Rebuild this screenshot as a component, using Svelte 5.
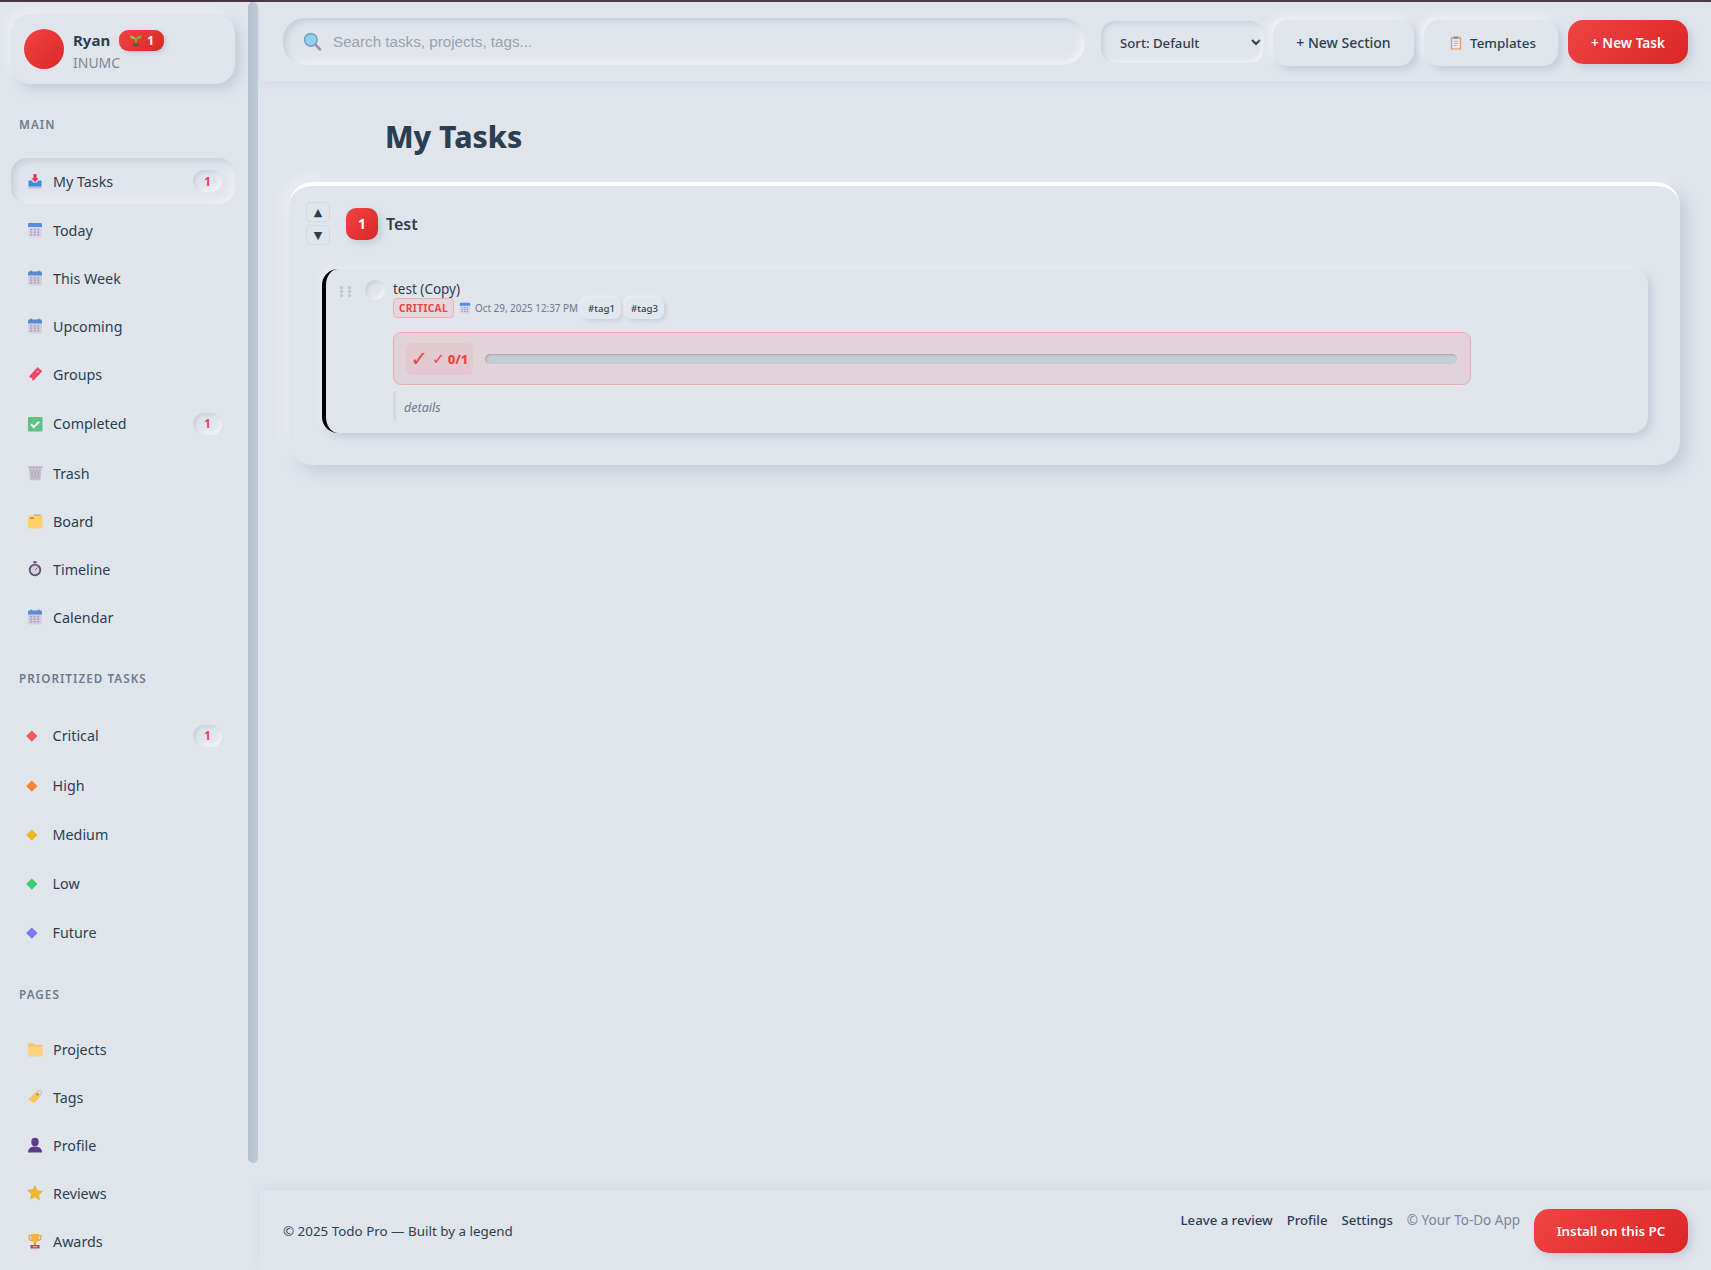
<script>
  const main = [
    { label: 'My Tasks', icon: 'inbox', badge: 1, active: true },
    { label: 'Today', icon: 'cal1' },
    { label: 'This Week', icon: 'cal2' },
    { label: 'Upcoming', icon: 'cal2' },
    { label: 'Groups', icon: 'ticket' },
    { label: 'Completed', icon: 'check', badge: 1 },
    { label: 'Trash', icon: 'trash' },
    { label: 'Board', icon: 'board' },
    { label: 'Timeline', icon: 'watch' },
    { label: 'Calendar', icon: 'cal2' }
  ];
  const prios = [
    { label: 'Critical', color: '#ef5a5f', badge: 1 },
    { label: 'High', color: '#f98234' },
    { label: 'Medium', color: '#eab72b' },
    { label: 'Low', color: '#3ecb72' },
    { label: 'Future', color: '#7a7bf0' }
  ];
  const pages = [
    { label: 'Projects', icon: 'folder' },
    { label: 'Tags', icon: 'tag' },
    { label: 'Profile', icon: 'bust' },
    { label: 'Reviews', icon: 'star' },
    { label: 'Awards', icon: 'trophy' }
  ];
  const grid = [3, 6.5, 10];
</script>

{#snippet calGrid()}
  {#each grid as x}
    {#each [7.5, 10, 12.5] as y}
      <rect x={x + 0.2} y={y - 0.6} width="2" height="1.5" fill="#a79dbd" />
    {/each}
  {/each}
{/snippet}

{#snippet icon(name)}
  <svg class="ico" viewBox="0 0 16 16" aria-hidden="true">
    {#if name === 'inbox'}
      <path d="M1.5 13.5h13v1.5a.6.6 0 0 1-.6.6H2.1a.6.6 0 0 1-.6-.6z" fill="#cbb9d3" />
      <path d="M1.5 7.5h3.4l1 2h4.2l1-2h3.4v6h-13z" fill="#3a8fde" />
      <path d="M6.4 1h3.2v4.2h2.2L8 9 4.2 5.2h2.2z" fill="#e8365d" />
    {:else if name === 'cal1'}
      <rect x="1" y="1" width="14" height="14.5" rx="1.4" fill="#dcd3e8" />
      <path d="M1 2.4A1.4 1.4 0 0 1 2.4 1h11.2A1.4 1.4 0 0 1 15 2.4V5H1z" fill="#4a90f0" />
      {@render calGrid()}
    {:else if name === 'cal2'}
      <rect x="1" y="1.6" width="14" height="13.9" rx="1.4" fill="#d3cfdf" />
      <path d="M1 3a1.4 1.4 0 0 1 1.4-1.4h11.2A1.4 1.4 0 0 1 15 3v2.6H1z" fill="#5490d8" />
      <rect x="3.6" y="0.4" width="1" height="2.4" fill="#6b6b8e" />
      <rect x="11.4" y="0.4" width="1" height="2.4" fill="#6b6b8e" />
      {@render calGrid()}
    {:else if name === 'ticket'}
      <path d="M10.6 1l4.6 4.2-8.8 9.6-1.4-1.3.2-1.6-1.6.1L2 10.5z" fill="#f0476b" />
      <circle cx="10.5" cy="5.8" r="1.1" fill="#f9a9bb" />
    {:else if name === 'check'}
      <rect x="1" y="1" width="14.5" height="14.5" rx="1" fill="#5dc286" />
      <path d="M4 8.2l2.8 2.8L12.2 5.8" fill="none" stroke="#eef8f1" stroke-width="2" />
    {:else if name === 'trash'}
      <path d="M.8 1.2h14.9l-.6 2H1.4z" fill="#b9b4c6" />
      <path d="M1.8 3h12.9l-1.2 12.2H3z" fill="#c7c2d2" />
      <path d="M3.5 4.5l3 9M6.5 4.5l3 9M9.5 4.5l3 9M13 4.5l-3 9M10 4.5l-3 9M7 4.5l-3 9" stroke="#a9a4b8" stroke-width=".6" />
    {:else if name === 'board'}
      <path d="M7 1.4h6.2l1.2 3H7z" fill="#8fa88a" />
      <rect x="1" y="2.6" width="14.5" height="13" rx="1" fill="#fdd26e" />
      <rect x="3" y="4.6" width="4" height="1" fill="#e0483e" />
    {:else if name === 'watch'}
      <rect x="6.4" y="0.2" width="3.2" height="2" fill="#54506e" />
      <circle cx="8" cy="9" r="6.2" fill="#5a5478" />
      <circle cx="8" cy="9" r="4.4" fill="#d8d0de" />
      <path d="M8 9l2.4-2.4" stroke="#e8365d" stroke-width="1" />
    {:else if name === 'folder'}
      <path d="M1 2.2h5.4l1.4 1.6H15.5v11.4H1z" fill="#fbc463" />
      <path d="M1 5.6h14.5v9.6H1z" fill="#fdd27e" />
    {:else if name === 'tag'}
      <path d="M9.6 2.4l4.8 3.2-7 8.6L1 10.4z" fill="#f9c35e" />
      <path d="M10 2.5l3.2-1.3 1.4 1.1-.2 3.3" fill="none" stroke="#b9b4c6" stroke-width=".9" />
      <circle cx="10.4" cy="5.4" r="1" fill="#e8567a" />
    {:else if name === 'bust'}
      <ellipse cx="8" cy="4.9" rx="3.7" ry="4.2" fill="#5c3a8a" />
      <path d="M1 15.6c0-4 3-6 7-6s7 2 7 6z" fill="#5c3a8a" />
    {:else if name === 'star'}
      <path d="M8 .6l2.3 4.9 5.4.7-4 3.7 1 5.4L8 12l-4.7 2.3 1-5.4-4-3.7 5.4-.7z" fill="#eeb92e" stroke="#e2a830" stroke-width=".4" stroke-linejoin="round" />
    {:else if name === 'trophy'}
      <path d="M2 2.5h12v2c0 2-1.5 3-3 3M2 2.5v2c0 2 1.5 3 3 3" fill="none" stroke="#e6a02c" stroke-width="1.2" />
      <path d="M4 1h8v4.6c0 2.4-1.8 3.9-4 3.9S4 8 4 5.6z" fill="#f4b43c" />
      <rect x="7" y="9" width="2" height="3" fill="#e6a02c" />
      <rect x="3.4" y="12" width="9.2" height="3.6" rx=".5" fill="#9c5560" />
      <rect x="6" y="13.2" width="4" height="1.1" fill="#eec46a" />
    {/if}
  </svg>
{/snippet}

{#snippet item(it)}
  <div class="item" class:active={it.active} class:tall={it.badge}>
    {@render icon(it.icon)}
    <span class="lbl">{it.label}</span>
    {#if it.badge}<span class="count">{it.badge}</span>{/if}
  </div>
{/snippet}

<div class="topline"></div>
<div class="app">
  <aside class="sidebar">
    <div class="scrollthumb"></div>
    <div class="user">
      <div class="avatar"></div>
      <div class="who">
        <div class="nameline">
          <span class="name">Ryan</span>
          <span class="level">
            <svg class="sprout" viewBox="0 0 16 16" aria-hidden="true">
              <path d="M8 6v5.5" stroke="#7fb338" stroke-width="1.8" />
              <path d="M8 7C7 3.8 4.4 3 1 3c.4 3 3 4.6 7 4z" fill="#8cc63f" />
              <path d="M8 6.6c.6-2.4 3-3.4 7-3.4-.5 2.6-3 4.4-7 3.4z" fill="#7fb338" />
              <path d="M4 15c.4-3 2-4 4-4s3.6 1 4 4z" fill="#7b4f3a" />
            </svg>
            1
          </span>
        </div>
        <div class="org">INUMC</div>
      </div>
    </div>

    <div class="heading first">MAIN</div>
    {#each main as it}{@render item(it)}{/each}

    <div class="heading">PRIORITIZED TASKS</div>
    {#each prios as p}
      <div class="item prio" class:tall={p.badge}>
        <span class="diamond" style="background:{p.color}"></span>
        <span class="lbl">{p.label}</span>
        {#if p.badge}<span class="count">{p.badge}</span>{/if}
      </div>
    {/each}

    <div class="heading last">PAGES</div>
    {#each pages as it}{@render item(it)}{/each}
  </aside>

  <div class="main">
    <header class="topbar">
      <div class="search">
        <svg class="mag" viewBox="0 0 18 18" aria-hidden="true">
          <path d="M11 11l5 5.4" stroke="#a88bb5" stroke-width="2.6" stroke-linecap="round" />
          <circle cx="7.4" cy="7.4" r="6" fill="#8fd3ea" stroke="#7a9cc0" stroke-width="1.4" />
        </svg>
        <input type="text" placeholder="Search tasks, projects, tags..." />
      </div>
      <select class="sort"><option>Sort: Default</option></select>
      <button class="btn section-btn">+ New Section</button>
      <button class="btn tpl">
        <svg class="clip" viewBox="0 0 14 16" aria-hidden="true">
          <rect x="1" y="1.4" width="12" height="14.2" rx="1" fill="#e09a62" />
          <rect x="2.5" y="3" width="9" height="11.4" fill="#ece8f0" />
          <rect x="4" y="0.4" width="6" height="2.6" fill="#8a8a9c" />
          <path d="M4 6h6M4 8.6h6M4 11.2h4" stroke="#b7a9cc" stroke-width="1" />
        </svg>
        Templates
      </button>
      <button class="btn primary">+ New Task</button>
    </header>

    <main class="content">
      <h1>My Tasks</h1>
      <section class="card">
        <div class="head">
          <div class="arrows">
            <button class="arrow">▲</button>
            <button class="arrow">▼</button>
          </div>
          <span class="num">1</span>
          <h2>Test</h2>
        </div>

        <div class="task">
          <div class="handle">
            {#each Array(6) as _}<i></i>{/each}
          </div>
          <div class="circle"></div>
          <div class="body">
            <div class="title">test (Copy)</div>
            <div class="meta">
              <span class="crit">CRITICAL</span>
              <svg class="ico small" viewBox="0 0 16 16" aria-hidden="true">
                <rect x="1" y="1" width="14" height="14.5" rx="1.4" fill="#dcd3e8" />
                <path d="M1 2.4A1.4 1.4 0 0 1 2.4 1h11.2A1.4 1.4 0 0 1 15 2.4V5H1z" fill="#4a90f0" />
                {@render calGrid()}
              </svg>
              <span class="date">Oct 29, 2025 12:37 PM</span>
              <span class="tagchip">#tag1</span>
              <span class="tagchip">#tag3</span>
            </div>
            <div class="progress">
              <span class="pcount"><span class="bigcheck">✓</span><span class="smallcheck">✓</span> 0/1</span>
              <div class="bar"></div>
            </div>
            <div class="details">details</div>
          </div>
        </div>
      </section>
    </main>

    <footer class="footer">
      <span class="copy">© 2025 Todo Pro — Built by a legend</span>
      <div class="fright">
        <nav class="links">
          <span>Leave a review</span>
          <span>Profile</span>
          <span>Settings</span>
          <span class="muted">© Your To-Do App</span>
        </nav>
        <button class="install">Install on this PC</button>
      </div>
    </footer>
  </div>
</div>

<style>
  :global(body) {
    margin: 0;
    background: #e0e5ec;
    overflow: hidden;
  }
  .topline {
    height: 2px;
    background: #4a3540;
  }
  .app {
    display: grid;
    grid-template-columns: 260px 1fr;
    height: calc(100vh - 2px);
    font-family: "Noto Sans", "Open Sans", sans-serif;
    color: #2c3e50;
    background: #e0e5ec;
  }
  .sidebar {
    position: relative;
    box-sizing: border-box;
    height: 100%;
    overflow: hidden;
    padding: 12px 25px 0 11px;
  }
  .scrollthumb {
    position: absolute;
    top: 0;
    left: 248px;
    width: 10px;
    height: 1161px;
    border-radius: 5px;
    background: linear-gradient(90deg, #b4c1cf, #bfcad7);
  }
  .user {
    display: flex;
    align-items: center;
    gap: 9px;
    height: 70px;
    box-sizing: border-box;
    padding: 0 13px;
    border-radius: 20px;
    background: #e0e5ec;
    box-shadow: 5px 5px 12px #c3ccd9, -4px -4px 8px #eef1f5;
  }
  .avatar {
    width: 40px;
    height: 40px;
    flex: none;
    border-radius: 50%;
    background: linear-gradient(135deg, #ef4444, #dc2626);
  }
  .who {
    margin-bottom: -2px;
  }
  .nameline {
    display: flex;
    align-items: center;
    gap: 9px;
    height: 24px;
  }
  .name {
    font-size: 15px;
    font-weight: 700;
    line-height: 20px;
  }
  .level {
    display: inline-flex;
    align-items: center;
    justify-content: center;
    gap: 4px;
    width: 45px;
    height: 21px;
    border-radius: 9px;
    font-size: 12.5px;
    font-weight: 700;
    color: #fff;
    background: linear-gradient(135deg, #ef4444, #dc2626);
    box-shadow: 2px 2px 5px #c3ccd9;
  }
  .sprout {
    width: 14px;
    height: 14px;
  }
  .org {
    margin-top: 2px;
    font-size: 14px;
    line-height: 18px;
    color: #7c8797;
  }
  .heading {
    margin: 31px 0 26px 8px;
    font-size: 11.7px;
    line-height: 16px;
    font-weight: 600;
    letter-spacing: 1.05px;
    color: #6f7a8b;
  }
  .heading.first {
    margin-top: 32px;
    margin-bottom: 26px;
  }
  .heading.last {
    margin-bottom: 25px;
  }
  .item {
    display: flex;
    align-items: center;
    height: 44px;
    box-sizing: border-box;
    margin-bottom: 4px;
    padding: 0 13px 0 16px;
    border-radius: 16px;
    font-size: 14.3px;
    color: #2c3e50;
  }
  .item.tall {
    height: 47px;
  }
  .item.active {
    height: 46px;
  }
  .item.prio {
    height: 45px;
  }
  .item.prio.tall {
    height: 47px;
  }
  .item.active {
    box-shadow: inset 3px 3px 7px #c5cdd9, inset -3px -3px 7px #f2f4f8;
  }
  .ico {
    width: 16px;
    height: 16px;
    flex: none;
  }
  .ico.small {
    width: 12px;
    height: 12px;
  }
  .lbl {
    margin-left: 10px;
  }
  .prio .lbl {
    margin-left: 16px;
  }
  .diamond {
    width: 7.6px;
    height: 7.6px;
    margin-left: 1px;
    margin-right: 1px;
    flex: none;
    transform: rotate(45deg);
  }
  .count {
    margin-left: auto;
    width: 29px;
    height: 22px;
    border-radius: 11px;
    display: flex;
    align-items: center;
    justify-content: center;
    font-size: 11.5px;
    font-weight: 700;
    color: #ef4060;
    box-shadow: inset 2px 2px 4px #c8cfdb, inset -2px -2px 4px #f5f7fa;
  }

  .main {
    display: flex;
    flex-direction: column;
    min-width: 0;
  }
  .topbar {
    display: flex;
    align-items: center;
    height: 79px;
    flex: none;
    box-sizing: border-box;
    padding: 0 23px;
    box-shadow: 0 3px 10px rgba(180, 192, 208, 0.25);
  }
  .search {
    display: flex;
    align-items: center;
    width: 802px;
    height: 47px;
    box-sizing: border-box;
    padding: 0 20px;
    border-radius: 22px;
    box-shadow: inset 3px 3px 7px #c5cdd9, inset -3px -3px 7px #f5f7fa;
  }
  .mag {
    width: 19px;
    height: 19px;
    flex: none;
  }
  .search input {
    flex: 1;
    min-width: 0;
    margin-left: 11px;
    border: 0;
    outline: 0;
    padding: 0;
    background: transparent;
    font-family: "Liberation Sans", Arial, sans-serif;
    font-size: 15.2px;
  }
  .search input::placeholder {
    color: #9ca3af;
    opacity: 1;
  }
  .sort {
    width: 163px;
    height: 42px;
    margin-left: 16px;
    margin-top: 1px;
    box-sizing: border-box;
    padding: 2px 15px 0;
    border: 0;
    border-radius: 14px;
    background: #e0e5ec;
    font-family: inherit;
    font-size: 13.2px;
    font-weight: 500;
    color: #2c3e50;
    box-shadow: inset 2px 2px 5px #c5cdd9, inset -2px -2px 5px #f5f7fa;
  }
  .btn {
    display: inline-flex;
    align-items: center;
    justify-content: center;
    height: 46px;
    margin-top: 2px;
    border: 0;
    border-radius: 15px;
    background: #e0e5ec;
    font-family: inherit;
    font-size: 14px;
    font-weight: 500;
    color: #2c3e50;
    box-shadow: 4px 4px 9px #c3ccd9, -3px -3px 7px #f3f5f8;
  }
  .section-btn {
    width: 141px;
    margin-left: 9px;
  }
  .tpl {
    width: 134px;
    margin-left: 10px;
    gap: 8px;
    padding-left: 10px;
    font-size: 13.4px;
  }
  .clip {
    width: 12px;
    height: 14px;
  }
  .primary {
    width: 120px;
    height: 44px;
    margin-left: 10px;
    margin-top: 1px;
    color: #fff;
    font-size: 13.6px;
    font-weight: 600;
    background: linear-gradient(135deg, #ef4444, #dc2626);
    box-shadow: 4px 4px 10px #c3ccd9;
  }

  .content {
    flex: 1;
    min-height: 0;
    padding: 0 31px 0 29px;
  }
  h1 {
    margin: 36px 0 25px 96px;
    font-size: 30px;
    line-height: 40px;
    font-weight: 800;
    color: #2c3e50;
  }
  .card {
    box-sizing: border-box;
    border-top: 4px solid #fff;
    padding: 16px 32px 32px 33px;
    border-radius: 24px;
    background: #e0e5ec;
    box-shadow: 7px 7px 16px #c3ccd9, -4px -4px 12px #eef1f5;
  }
  .head {
    display: flex;
    align-items: center;
    height: 43px;
    margin-bottom: 24px;
    margin-left: -16px;
  }
  .arrows {
    display: flex;
    flex-direction: column;
    gap: 3px;
    margin-right: 16px;
  }
  .arrow {
    width: 24px;
    height: 20px;
    padding: 0;
    box-sizing: border-box;
    border: 1px solid #d3d9e2;
    border-radius: 5px;
    background: #e0e5ec;
    font-family: "DejaVu Sans", sans-serif;
    font-size: 11px;
    line-height: 1;
    color: #2c3e50;
  }
  .num {
    display: flex;
    align-items: center;
    justify-content: center;
    width: 32px;
    height: 32px;
    border-radius: 10px;
    font-size: 14px;
    font-weight: 700;
    color: #fff;
    background: linear-gradient(135deg, #ef4444, #dc2626);
    box-shadow: 3px 3px 7px #c3ccd9;
  }
  h2 {
    margin: 0 0 0 8px;
    font-size: 16px;
    font-weight: 600;
    color: #2c3e50;
  }
  .task {
    display: flex;
    align-items: flex-start;
    box-sizing: border-box;
    padding: 11px 177px 12px 14px;
    border-left: 4px solid #000;
    border-radius: 16px;
    background: #e0e5ec;
    box-shadow: 4px 4px 9px #c3ccd9, -2px -2px 5px #eef1f5;
  }
  .handle {
    display: grid;
    grid-template-columns: 3px 3px;
    gap: 1px 5px;
    margin-top: 6px;
    width: 11px;
    flex: none;
  }
  .handle i {
    width: 3px;
    height: 3px;
    background: #c2c9d4;
  }
  .circle {
    width: 20px;
    height: 20px;
    margin-left: 14px;
    flex: none;
    border-radius: 50%;
    box-shadow: inset 2px 2px 4px #c8cfdb, inset -2px -2px 4px #f5f7fa;
  }
  .body {
    flex: 1;
    min-width: 0;
    margin-left: 8px;
  }
  .title {
    font-size: 13.5px;
    line-height: 20px;
    margin-top: -1px;
    margin-bottom: -1px;
  }
  .meta {
    display: flex;
    align-items: center;
    height: 20px;
  }
  .crit {
    display: flex;
    align-items: center;
    justify-content: center;
    width: 61px;
    height: 20px;
    box-sizing: border-box;
    border: 1px solid #eeb0b4;
    border-radius: 4px;
    font-size: 10.2px;
    font-weight: 700;
    letter-spacing: 0.35px;
    color: #ef4444;
    background: #e6d7dd;
  }
  .meta .ico {
    margin-left: 5px;
  }
  .date {
    margin-left: 4px;
    font-size: 9.9px;
    color: #6f7a8b;
  }
  .tagchip {
    display: flex;
    align-items: center;
    justify-content: center;
    width: 39px;
    height: 21px;
    border-radius: 7px;
    margin-left: 4px;
    font-size: 9.6px;
    font-weight: 500;
    color: #2c3e50;
    background: #e2e7ee;
    box-shadow: 2px 2px 4px #c6cedb, -1px -1px 3px #f5f7fa;
  }
  .progress {
    display: flex;
    align-items: center;
    height: 53px;
    margin-top: 14px;
    box-sizing: border-box;
    padding: 0 13px 0 12px;
    border: 1px solid #eaacb1;
    border-radius: 8px;
    background: #e2d3da;
  }
  .pcount {
    display: flex;
    align-items: center;
    justify-content: center;
    gap: 3px;
    width: 67px;
    height: 32px;
    flex: none;
    border-radius: 6px;
    background: #e3c9cf;
    font-size: 13px;
    font-weight: 800;
    color: #ef4444;
  }
  .bigcheck {
    font-family: "DejaVu Sans", sans-serif;
    font-size: 21px;
    font-weight: 400;
  }
  .smallcheck {
    font-family: "DejaVu Sans", sans-serif;
    font-size: 15px;
    font-weight: 400;
    margin-left: 1px;
  }
  .bar {
    flex: 1;
    height: 10px;
    margin-left: 12px;
    border-radius: 5px;
    background: #c8ccd4;
    box-shadow: inset 1px 1px 2px #9fa5ae;
  }
  .details {
    height: 30px;
    margin-top: 6px;
    box-sizing: border-box;
    padding-left: 8px;
    padding-top: 3px;
    border-left: 3px solid #d3d9e2;
    border-radius: 4px;
    background: #e1e5ec;
    font-size: 12.5px;
    font-style: italic;
    line-height: 27px;
    color: #6f7a8b;
  }

  .footer {
    display: flex;
    align-items: center;
    justify-content: space-between;
    height: 80px;
    flex: none;
    box-sizing: border-box;
    padding: 0 23px;
    box-shadow: 0 -3px 10px rgba(180, 192, 208, 0.25);
  }
  .copy {
    font-size: 13.4px;
    margin-top: 2px;
  }
  .fright {
    display: flex;
    align-items: center;
    margin-top: 2px;
  }
  .links {
    display: flex;
    gap: 14px;
    font-size: 13.2px;
    font-weight: 500;
    margin-bottom: 22px;
  }
  .muted {
    font-weight: 400;
    font-size: 13.5px;
    color: #7c8797;
  }
  .install {
    width: 154px;
    height: 44px;
    margin-left: 14px;
    border: 0;
    border-radius: 15px;
    color: #fff;
    font-family: inherit;
    font-size: 13.3px;
    font-weight: 600;
    background: linear-gradient(135deg, #ef4444, #dc2626);
    box-shadow: 4px 4px 10px #c3ccd9;
  }
</style>
